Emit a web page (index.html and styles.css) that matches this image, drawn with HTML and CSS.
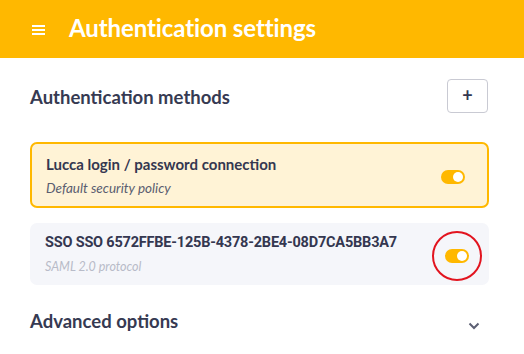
FILE: index.html
```html
<!DOCTYPE html>
<html lang="en">
<head>
    <meta charset="utf-8">
    <title>Authentication settings</title>
    <link rel="stylesheet" href="styles.css">
</head>
<body>
<div class="header">
    <span class="burger"><span></span><span></span><span></span></span>
    <h1 class="page_title">Authentication settings</h1>
</div>

<div class="content">
    <div class="section_head">
        <h2 class="section_title">Authentication methods</h2>
        <button class="add_button" type="button">+</button>
    </div>

    <div class="method method_default">
        <div class="method_text">
            <div class="method_name">Lucca login / password connection</div>
            <div class="method_desc">Default security policy</div>
        </div>
        <span class="toggle"><span class="knob"></span></span>
    </div>

    <div class="method method_sso">
        <div class="method_text">
            <div class="method_name sso_name">SSO SSO 6572FFBE-125B-4378-2BE4-08D7CA5BB3A7</div>
            <div class="method_desc sso_desc">SAML 2.0 protocol</div>
        </div>
        <span class="toggle highlighted"><span class="knob"></span></span>
    </div>

    <div class="section_head advanced">
        <h2 class="section_title">Advanced options</h2>
        <svg class="chevron" width="12" height="8" viewBox="0 0 12 8">
            <path d="M1.5 1.5 L6 6 L10.5 1.5" fill="none" stroke="#5c5f73" stroke-width="2"/>
        </svg>
    </div>
</div>
</body>
</html>
```

FILE: styles.css
```css
body {
    margin: 0;
    font-family: "Source Sans Pro", "Lato", "Open Sans", sans-serif;
    color: #343750;
    background-color: #fff;
}

.header {
    height: 58px;
    background-color: #ffb800;
    display: flex;
    align-items: center;
    padding-left: 32px;
}

.burger {
    display: flex;
    flex-direction: column;
    gap: 2px;
    width: 13px;
    margin-right: 24px;
    margin-top: 1px;
}

.burger span {
    display: block;
    height: 2px;
    background-color: #fff;
}

.page_title {
    margin: 0;
    color: #fff;
    font-size: 24px;
    font-weight: bold;
    letter-spacing: -0.1px;
    margin-top: -4px;
}

.content {
    padding: 0 35px 0 30px;
}

.section_head {
    display: flex;
    align-items: center;
    justify-content: space-between;
    height: 34px;
    margin-top: 21px;
    margin-bottom: 29px;
}

.section_title {
    margin: 0;
    font-size: 18.5px;
    font-weight: bold;
    color: #363a52;
    margin-top: 1px;
}

.add_button {
    width: 41px;
    height: 34px;
    border: 1px solid #c9cad3;
    border-radius: 4px;
    background-color: #fff;
    color: #343750;
    font-family: "Lato", sans-serif;
    font-size: 18px;
    font-weight: bold;
    padding: 0 0 2px 0;
    margin-right: 1px;
}

.method {
    display: flex;
    align-items: center;
    justify-content: space-between;
    border-radius: 7px;
    padding: 0 22px 0 14px;
}

.method_default {
    height: 62px;
    border: 2px solid #ffb800;
    background-color: #fff3d6;
}

.method_sso {
    height: 62px;
    margin-top: 15px;
    padding-left: 15px;
    padding-right: 20px;
    background-color: #f5f6fa;
}

.method_name {
    font-size: 15px;
    font-weight: bold;
    color: #343750;
    line-height: 18px;
    margin-top: 1px;
}

.sso_name {
    font-family: "Roboto", sans-serif;
    font-size: 14.5px;
    font-weight: bold;
    letter-spacing: -0.2px;
    margin-top: 0;
}

.method_desc {
    font-size: 13.5px;
    font-style: italic;
    color: #5a5d70;
    margin-top: 7px;
    line-height: 16px;
}

.sso_desc {
    font-size: 12.5px;
    color: #b8bbc8;
    margin-top: 7px;
}

.toggle {
    position: relative;
    display: block;
    width: 24px;
    height: 14px;
    border-radius: 7px;
    background-color: #ffb800;
    margin-top: 3px;
}

.knob {
    position: absolute;
    right: 2px;
    top: 2px;
    width: 10px;
    height: 10px;
    border-radius: 50%;
    background-color: #fff;
}

.highlighted::after {
    content: "";
    position: absolute;
    left: -13px;
    top: -18px;
    width: 46px;
    height: 46px;
    border: 2px solid #e2141f;
    border-radius: 50%;
}

.advanced {
    margin-top: 18px;
}

.chevron {
    margin-top: 12px;
    margin-right: 9px;
}
```
